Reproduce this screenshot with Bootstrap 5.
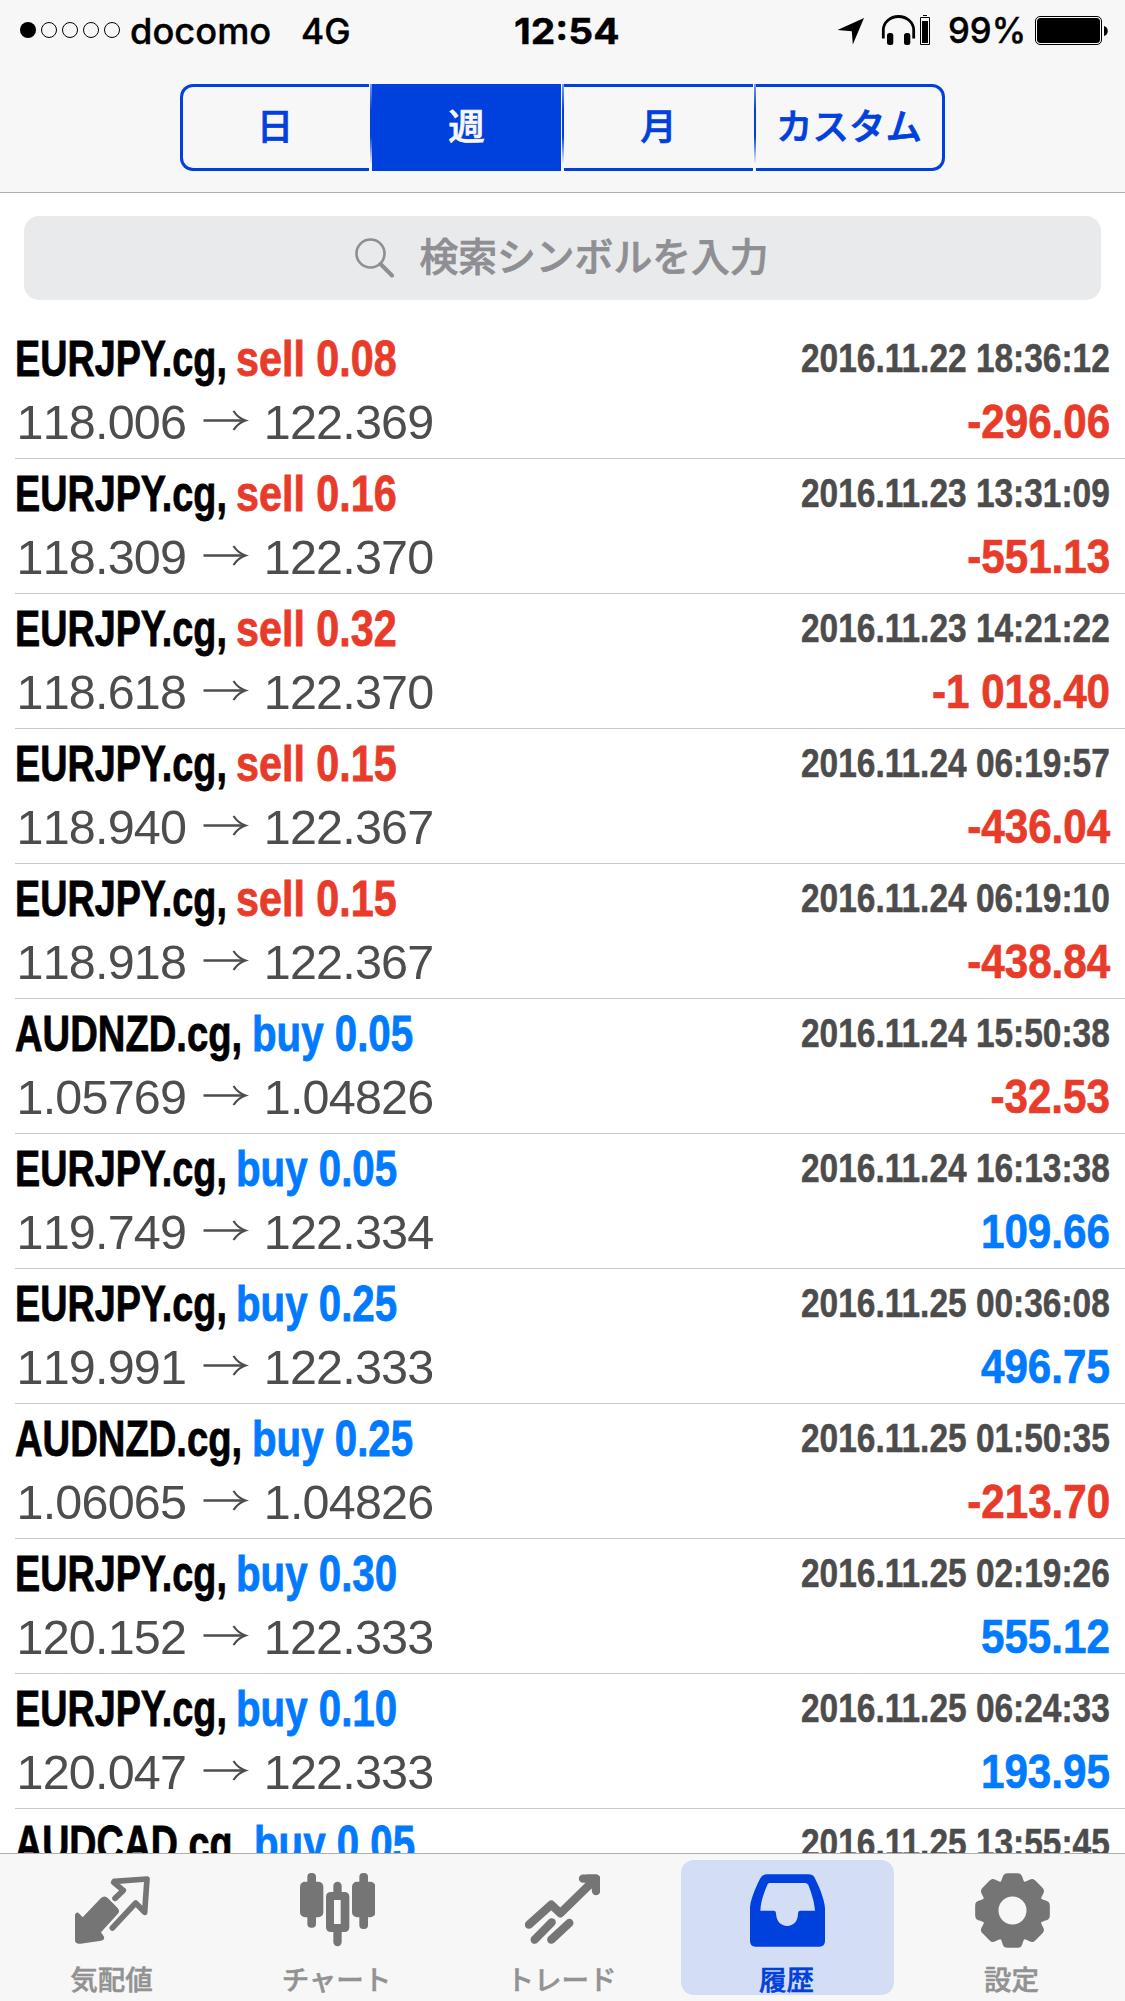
<!DOCTYPE html>
<html lang="ja">
<head>
<meta charset="utf-8">
<meta name="viewport" content="width=device-width, initial-scale=1">
<title>履歴</title>
<link href="https://cdn.jsdelivr.net/npm/bootstrap@5.3.0/dist/css/bootstrap.min.css" rel="stylesheet">
<style>
  :root { --ink-blue:#0040dd; --buy:#007aff; --sell:#e83b2a; --bar:#f7f7f7; }
  body { font-family:"Liberation Sans","Noto Sans CJK JP",sans-serif; color:#000; }
  svg { display:block; flex:none; }
  .screen { height:2001px; overflow:hidden; background:#fff; }
  .topbar { height:193px; background:var(--bar); border-bottom:1px solid #b0b0b1; }
  .statusbar { height:60px; padding:0 16px 0 19px; font-family:Inter,sans-serif; font-size:36px; line-height:62px; font-weight:500; white-space:nowrap; -webkit-text-stroke:.4px; }
  .statusbar .side { flex:1 1 0; }
  .clock { margin-right:3px; }
  .fit { display:inline-block; transform-origin:0 50%; white-space:pre; }
  .segments { width:765px; height:87px; margin:24px auto 0; }
  .segments .btn { flex:0 0 189px; border:solid var(--ink-blue); border-width:3px 0; border-radius:0; padding:0;
    font:500 36.5px/75px "Noto Sans CJK JP",sans-serif; color:var(--ink-blue); -webkit-text-stroke:.7px; }
  .segments .btn.active { background:var(--ink-blue); color:#f7f7f7; border-color:var(--ink-blue); }
  .segments .btn:first-child { border-left-width:3px; border-radius:13px 0 0 13px; padding-right:2px; }
  .segments .btn:last-child { border-right-width:3px; border-radius:0 13px 13px 0; }
  .segments .btn { display:flex; justify-content:center; align-items:flex-start; }
  .seam { flex:0 0 3px; background:linear-gradient(to bottom,#7c9df0,var(--ink-blue) 30%,var(--ink-blue) 60%,transparent 92%) .5px 0/2px 100% no-repeat; }
  .searchbox { margin:23px 24px 24px; height:84px; border-radius:15px; background:#e9eaec; color:#8e8e93; font:500 38.8px/84px "Noto Sans CJK JP",sans-serif; gap:24px; -webkit-text-stroke:.7px; }
  .searchbox span { margin:-8px 1px 0 0; }
  .deals { height:1529px; overflow:hidden; }
  .deal { height:135px; margin-left:15px; padding-right:15px; border-bottom:1px solid #c8c7cc; flex:none; }
  .line-a { height:68px; padding-top:5px; }
  .line-b { height:66px; }
  .symbol,.action { font-size:49.5px; font-weight:700; line-height:60px; -webkit-text-stroke:.8px; }
  .when { font-size:40.5px; font-weight:700; line-height:58px; color:#4c4c4c; transform-origin:100% 50%; -webkit-text-stroke:.5px; }
  .price { font-size:48.5px; line-height:60px; color:#4d4d4d; letter-spacing:-.8px; font-kerning:none; padding-left:1.5px; }
  .profit { font-size:49px; font-weight:700; line-height:58px; transform-origin:100% 50%; -webkit-text-stroke:.7px; }
  .is-sell { color:var(--sell); } .is-buy { color:var(--buy); }
  .tabs { height:148px; background:var(--bar); border-top:1px solid #b0b0b1; padding-top:6px; }
  .tab { width:213px; height:135px; margin:0 6px; padding-top:13px; border-radius:13px; color:#929292; font:500 27.5px/40px "Noto Sans CJK JP",sans-serif; text-decoration:none; -webkit-text-stroke:.5px; }
  .tab svg { color:#757575; margin-bottom:10px; }
  .tab span { margin-right:2px; }
  .tab.current,.tab.current svg { color:var(--ink-blue); }
  .tab.current { background:#d3ddf4; }
</style>
<script src="https://cdn.jsdelivr.net/npm/bootstrap@5.3.0/dist/js/bootstrap.bundle.min.js"></script>
</head>
<body>
<div class="screen d-flex flex-column">
  <header class="topbar flex-shrink-0">
    <div class="statusbar d-flex">
      <div class="side d-flex">
        <svg width="111" height="60" fill="none" stroke="#000"><circle cx="9" cy="30" r="8" fill="#000" stroke="none"/><circle cx="30" cy="30" r="7.5"/><circle cx="51" cy="30" r="7.5"/><circle cx="72" cy="30" r="7.5"/><circle cx="93" cy="30" r="7.5"/></svg>
        <span style="width:171px"><span class="fit" data-w="141">docomo</span></span>
        <span class="fit" data-w="50">4G</span>
      </div>
      <b class="fit clock" data-w="106">12:54</b>
      <div class="side d-flex justify-content-end align-items-center">
        <svg width="95" height="60" viewBox="837 0 95 60"><path d="M837.5 30 864 18 852.8 44.5 851.8 31.3Z"/><path d="M883.3 38.5V30a15.2 13.5 0 0 1 30.4 0V38.5" fill="none" stroke="#000" stroke-width="2.8"/><rect x="887" y="33" width="6.3" height="12" rx="2.5"/><rect x="904" y="33" width="6.3" height="12" rx="2.5"/><path d="M920.5 17.5h9v27h-9z" fill="none" stroke="#000"/><path d="M922 21h6v22h-6zM923 15h4v1h-4z"/></svg>
        <span class="ms-3" style="width:87px"><span class="fit" data-w="78">99%</span></span>
        <svg width="74" height="60" viewBox="0 0 74 60"><rect x=".5" y="16.500" width="66" height="28" rx="4.500" fill="none" stroke="#000"/><rect x="2" y="18" width="63" height="25" rx="3.500"/><path d="M69 26c5 1 5 9 0 10z"/></svg>
      </div>
    </div>
    <div class="segments d-flex" role="group">
      <button class="btn">日</button><i class="seam"></i><button class="btn active">週</button><i class="seam"></i><button class="btn">月</button><i class="seam"></i><button class="btn">カスタム</button>
    </div>
  </header>
  <main class="flex-shrink-0">
    <div class="searchbox d-flex align-items-center justify-content-center">
      <svg width="40" height="40" viewBox="0 0 40 40" fill="none" stroke="#8e8e93"><circle cx="15.500" cy="15.500" r="14" stroke-width="2.600"/><path d="M25.500 26 37 37.500" stroke-width="4" stroke-linecap="round"/></svg>
      <span>検索シンボルを入力</span>
    </div>
    <div class="deals d-flex flex-column" id="deals"></div>
  </main>
  <nav class="tabs d-flex flex-shrink-0">
    <a class="tab d-flex flex-column align-items-center"><svg width="75" height="75" viewBox="225 249 225 225"><path d="M225 374Q230 362 238 371L248 382 303 324Q314 314 324 325L352 353Q362 363 353 372L303 427 312 440Q315 449 303 452L242 461Q225 463 225 450Z" fill="currentColor"/><path d="M345 325 370 301 341 277 343 274 441 267 434 367 407 339 337 414" fill="none" stroke="currentColor" stroke-width="17" stroke-linejoin="round" stroke-linecap="round"/></svg><span>気配値</span></a>
    <a class="tab d-flex flex-column align-items-center"><svg width="75" height="75" viewBox="900 249 225 225" fill="currentColor"><rect x="900" y="275" width="70" height="107" rx="15"/><rect x="922" y="249" width="26" height="164" rx="12"/><rect x="1056" y="275" width="70" height="107" rx="15"/><rect x="1078" y="249" width="26" height="168" rx="12"/><path fill-rule="evenodd" d="M1000 306V288a12.500 12.500 0 0 1 25 0V306H1033Q1048 306 1048 321V411Q1048 426 1033 426H1025V456a12.500 12.500 0 0 1-25 0V426H993Q978 426 978 411V321Q978 306 993 306ZM1002 330V402H1022V330Z"/></svg><span>チャート</span></a>
    <a class="tab d-flex flex-column align-items-center"><svg width="75" height="75" viewBox="435 249 225 225" fill="none" stroke="currentColor" stroke-width="25" stroke-linecap="round" stroke-linejoin="round"><path d="M447 404 514 344 541 370 640 273M609 266H648V303M464 449 515 397M514 449 568 399"/><path d="M625 266H648V290Z"/></svg><span>トレード</span></a>
    <a class="tab current d-flex flex-column align-items-center"><svg width="75" height="75" viewBox="75 249 225 225" fill="currentColor"><path fill-rule="evenodd" d="M75 350C79 320 99 278 106 265Q113 253 125 253H250Q263 253 269 263C281 287 298 325 300 355V453Q300 470 283 470H92Q75 470 75 453ZM133 279Q129 279 127 284C118 305 107 335 106 362H147Q153 362 153 370C154 395 168 408 187 408C205 408 219 395 219 370Q219 362 225 362H270C268 335 258 305 250 285Q247 279 240 279Z"/></svg><span>履歴</span></a>
    <a class="tab d-flex flex-column align-items-center"><svg width="75" height="75" viewBox="-112.500 -112.500 225 225" fill="currentColor"><circle r="67" fill="none" stroke="currentColor" stroke-width="50"/><g id="teeth"></g></svg><span>設定</span></a>
  </nav>
</div>
<script>
  const deals = [
    ["EURJPY","sell 0.08","2016.11.22 18:36:12","118.006","122.369","-296.06"],
    ["EURJPY","sell 0.16","2016.11.23 13:31:09","118.309","122.370","-551.13"],
    ["EURJPY","sell 0.32","2016.11.23 14:21:22","118.618","122.370","-1 018.40"],
    ["EURJPY","sell 0.15","2016.11.24 06:19:57","118.940","122.367","-436.04"],
    ["EURJPY","sell 0.15","2016.11.24 06:19:10","118.918","122.367","-438.84"],
    ["AUDNZD","buy 0.05","2016.11.24 15:50:38","1.05769","1.04826","-32.53"],
    ["EURJPY","buy 0.05","2016.11.24 16:13:38","119.749","122.334","109.66"],
    ["EURJPY","buy 0.25","2016.11.25 00:36:08","119.991","122.333","496.75"],
    ["AUDNZD","buy 0.25","2016.11.25 01:50:35","1.06065","1.04826","-213.70"],
    ["EURJPY","buy 0.30","2016.11.25 02:19:26","120.152","122.333","555.12"],
    ["EURJPY","buy 0.10","2016.11.25 06:24:33","120.047","122.333","193.95"],
    ["AUDCAD","buy 0.05","2016.11.25 13:55:45","","",""]
  ];
  // Condensed widths per symbol: drawn text width and offset of the action that follows it
  const widths = { EURJPY:[212,220.5], AUDNZD:[227,236.5], AUDCAD:[228,238.5] };
  document.getElementById("deals").innerHTML = deals.map(([s,a,t,p,q,r]) => `
    <div class="deal">
      <div class="line-a d-flex justify-content-between">
        <div class="d-flex"><span style="width:${widths[s][1]}px"><span class="fit symbol" data-w="${widths[s][0]}">${s}.cg,</span></span>
        <span class="fit action is-${a.split(" ")[0]}" data-w="161">${a}</span></div>
        <span class="fit when" data-w="309">${t}</span>
      </div>
      <div class="line-b d-flex justify-content-between">
        <div class="price d-flex"><span>${p}</span>${p ? '<svg width="77.500" height="60" viewBox="0 0 77.500 60" fill="none" stroke="#4d4d4d"><path d="M17.500 28.500H58" stroke-width="2.300"/><path d="M47.500 19Q52 26 59.500 28.500 52 31 47.500 38" stroke-width="2.200"/></svg>' : ""}<span>${q}</span></div>
        <span class="fit profit is-${r[0] === "-" ? "sell" : "buy"}" data-s=".86">${r}</span>
      </div>
    </div>`).join("");
  document.querySelectorAll(".fit").forEach(e => {
    const k = e.dataset.s || e.dataset.w / e.offsetWidth;
    e.style.transform = `scaleX(${k})`;
  });
  document.getElementById("teeth").innerHTML = [0,45,90,135,180,225,270,315].map(d =>
    `<path transform="rotate(${d})" d="M-42-80C-25-90-36-112-14-112H14C36-112 25-90 42-80Z"/>`).join("");
</script>
</body>
</html>
